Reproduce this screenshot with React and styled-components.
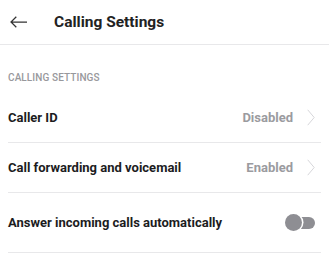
import React from "react";
import styled, { createGlobalStyle } from "styled-components";

const Global = createGlobalStyle`
  html, body { margin: 0; padding: 0; background: #fff; }
  body { font-family: Roboto, "Noto Sans", sans-serif; -webkit-font-smoothing: antialiased; }
  * { box-sizing: border-box; }
`;

const Page = styled.div`
  width: 329px;
  height: 254px;
  overflow: hidden;
  background: #fff;
`;

const Header = styled.header`
  display: flex;
  align-items: center;
  height: 45px;
  border-bottom: 1px solid #e8e8ea;
  padding: 0 10px 1px;
  gap: 27px;
`;

const BackButton = styled.button`
  border: 0;
  background: none;
  padding: 0;
  width: 17px;
  height: 12px;
  display: flex;
  color: #333;
`;

const Title = styled.h1`
  margin: 0;
  font-size: 15.5px;
  line-height: 18px;
  font-weight: 700;
  color: #222;
`;

const Section = styled.section`
  padding: 0 8px;
`;

const SectionLabel = styled.div`
  font-size: 10px;
  line-height: 12px;
  font-weight: 500;
  color: #98989c;
  letter-spacing: 0.1px;
  padding-top: 27px;
  padding-bottom: 8px;
`;

const Row = styled.div`
  display: flex;
  align-items: center;
  height: ${(p) => p.$h}px;
  border-bottom: 1px solid #e8e8ea;
`;

const Label = styled.div`
  flex: 1;
  font-size: 13px;
  font-weight: 700;
  color: #1c1c1e;
`;

const Value = styled.div`
  font-size: 13px;
  font-weight: 700;
  color: #9b9b9f;
  margin-right: 14px;
`;

const ChevronIcon = styled.svg`
  margin-right: 6px;
  flex: none;
`;

const Chevron = () => (
  <ChevronIcon width="8" height="17" viewBox="0 0 8 17">
    <path d="M0.7 0.8 L7.2 8.5 L0.7 16.2" fill="none" stroke="#d6d6da" strokeWidth="1" />
  </ChevronIcon>
);

const Toggle = styled.div`
  position: relative;
  flex: none;
  width: 30px;
  height: 17px;
  margin-right: 6px;
  &::before {
    content: "";
    position: absolute;
    left: 10px;
    right: 0;
    top: 2.5px;
    height: 12px;
    border-radius: 0 6px 6px 0;
    background: #8e8e93;
  }
  &::after {
    content: "";
    position: absolute;
    left: 0;
    top: 0;
    width: 17px;
    height: 17px;
    border-radius: 50%;
    background: #8e8e93;
    box-shadow: 0 0 0 1.5px #fff;
  }
`;

export default function App() {
  return (
    <Page>
      <Global />
      <Header>
        <BackButton aria-label="Back">
          <svg width="17" height="12" viewBox="0 0 17 12">
            <path d="M17 6 H1 M6.3 0.8 L1 6 L6.3 11.2" fill="none" stroke="#333" strokeWidth="1.25" />
          </svg>
        </BackButton>
        <Title>Calling Settings</Title>
      </Header>
      <Section>
        <SectionLabel>CALLING SETTINGS</SectionLabel>
        <Row $h={51}>
          <Label>Caller ID</Label>
          <Value>Disabled</Value>
          <Chevron />
        </Row>
        <Row $h={50}>
          <Label>Call forwarding and voicemail</Label>
          <Value>Enabled</Value>
          <Chevron />
        </Row>
        <Row $h={60}>
          <Label>Answer incoming calls automatically</Label>
          <Toggle />
        </Row>
      </Section>
    </Page>
  );
}
